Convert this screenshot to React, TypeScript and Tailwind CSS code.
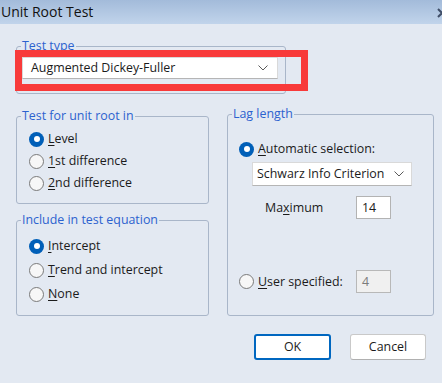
import type { ReactNode } from 'react';

const font = { fontFamily: '"Open Sans", "Noto Sans", "Liberation Sans", sans-serif' };

function Chevron() {
  return (
    <svg width="10" height="6" viewBox="0 0 10 6" className="shrink-0" aria-hidden="true">
      <path d="M0.5 0.5 L5 5 L9.5 0.5" fill="none" stroke="#5a5a5a" strokeWidth="1" />
    </svg>
  );
}

function Radio({ checked }: { checked?: boolean }) {
  if (checked) {
    return (
      <span className="flex h-[15px] w-[15px] shrink-0 items-center justify-center rounded-full bg-[#005fb8]">
        <span className="h-[6px] w-[6px] rounded-full bg-white" />
      </span>
    );
  }
  return <span className="h-[15px] w-[15px] shrink-0 rounded-full border border-[#7a7a7a] bg-[#f7f7f7]" />;
}

function Mnemonic({ text, at }: { text: string; at: number }) {
  return (
    <span>
      {text.slice(0, at)}
      <span className="underline underline-offset-2">{text[at]}</span>
      {text.slice(at + 1)}
    </span>
  );
}

function Group({ title, className, children }: { title: string; className?: string; children: ReactNode }) {
  return (
    <fieldset className={`rounded-[3px] border border-[#a9b6c9] ${className ?? ''}`}>
      <legend className="ml-[4px] px-[1px] text-[12.4px] leading-[16px] text-[#2c62cf]">{title}</legend>
      {children}
    </fieldset>
  );
}

function RadioRow({ label, at, checked, h }: { label: string; at: number; checked?: boolean; h: string }) {
  return (
    <div className={`flex items-center gap-[4px] pl-[12px] ${h}`}>
      <Radio checked={checked} />
      <Mnemonic text={label} at={at} />
    </div>
  );
}

export default function App() {
  return (
    <div
      className="relative h-[383px] w-[442px] overflow-hidden bg-[#e3e9f2] text-[12.4px] leading-[16px] text-[#1b1b1b]"
      style={font}
    >
      <div className="flex h-[24px] items-center justify-between bg-gradient-to-b from-[#a3bbda] to-[#c1d4eb] pl-[1px]">
        <span className="text-[14px] text-[#111]">Unit Root Test</span>
        <svg width="10" height="10" viewBox="0 0 10 10" className="-mr-[5px] mt-[1px]" aria-hidden="true">
          <path d="M1 1 L9 9 M9 1 L1 9" stroke="#3f4e68" strokeWidth="2" />
        </svg>
      </div>

      <div className="px-[16px] pt-[14px]">
        <Group title="Test type" className="w-[270px] pb-[14px]">
          <div className="ml-[5px] mt-[3px] flex h-[22px] w-[256px] items-center justify-between border border-[#d9d9d9] border-b-[#b5b5b5] bg-white pl-[8px] pr-[9px]">
            <span>Augmented Dickey-Fuller</span>
            <Chevron />
          </div>
        </Group>

        <div className="flex items-start">
          <div className="mt-[14px] w-[193px] shrink-0">
            <Group title="Test for unit root in" className="pb-[9px] pt-[4px]">
              <RadioRow label="Level" at={0} checked h="h-[22px]" />
              <RadioRow label="1st difference" at={0} h="h-[22px]" />
              <RadioRow label="2nd difference" at={0} h="h-[22px]" />
            </Group>
            <Group title="Include in test equation" className="mt-[8px] pb-[9px] pt-[6px]">
              <RadioRow label="Intercept" at={0} checked h="h-[24px]" />
              <RadioRow label="Trend and intercept" at={0} h="h-[24px]" />
              <RadioRow label="None" at={0} h="h-[24px]" />
            </Group>
          </div>

          <Group title="Lag length" className="ml-[18px] mt-[12px] w-[207px] shrink-0 pb-[22px] pt-[16px]">
            <div className="flex h-[22px] items-center gap-[4px] pl-[11px]">
              <Radio checked />
              <Mnemonic text="Automatic selection:" at={0} />
            </div>
            <div className="ml-[24px] mt-[2px] flex h-[24px] w-[160px] items-center justify-between border border-[#d9d9d9] border-b-[#b5b5b5] bg-white pl-[4px] pr-[7px]">
              <span>Schwarz Info Criterion</span>
              <Chevron />
            </div>
            <div className="mt-[10px] flex h-[23px] items-center">
              <span className="ml-[37px] w-[91px]">
                <Mnemonic text="Maximum" at={2} />
              </span>
              <div className="flex h-[23px] w-[35px] items-center border border-[#b3b3b3] bg-white pl-[5px]">14</div>
            </div>
            <div className="mt-[51px] flex h-[23px] items-center">
              <div className="flex w-[128px] items-center gap-[4px] pl-[11px]">
                <Radio />
                <Mnemonic text="User specified:" at={0} />
              </div>
              <div className="flex h-[23px] w-[35px] items-center border border-[#b8b8b8] bg-[#f0f0f0] pl-[5px] text-[#7c7c7c]">4</div>
            </div>
          </Group>
        </div>

        <div className="mt-[18px] flex justify-end gap-[19px]">
          <button className="h-[26px] w-[77px] rounded-[3px] border-2 border-[#0067c0] bg-white text-[12.4px]">OK</button>
          <button className="h-[26px] w-[76px] rounded-[3px] border border-[#c9c9c9] border-b-[#b0b0b0] bg-white text-[12.4px]">
            Cancel
          </button>
        </div>
      </div>

      <div className="pointer-events-none absolute left-[15px] top-[50px] h-[41px] w-[293px] border-[7px] border-[#f83a3a]" />
    </div>
  );
}
